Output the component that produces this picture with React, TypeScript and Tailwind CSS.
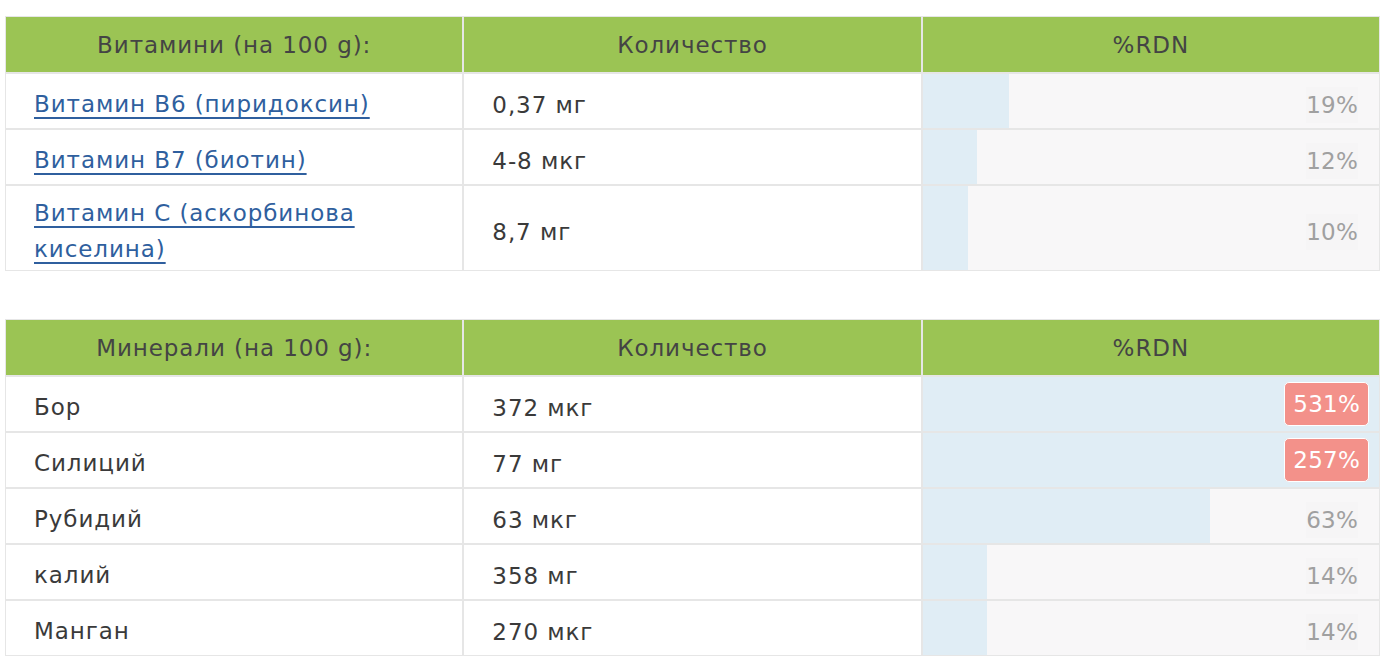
import React from "react";

type Row = { name: string; link?: boolean; qty: string; pct: number };

const vitamins: Row[] = [
  { name: "Витамин B6 (пиридоксин)", link: true, qty: "0,37 мг", pct: 19 },
  { name: "Витамин B7 (биотин)", link: true, qty: "4-8 мкг", pct: 12 },
  { name: "Витамин C (аскорбинова киселина)", link: true, qty: "8,7 мг", pct: 10 },
];

const minerals: Row[] = [
  { name: "Бор", qty: "372 мкг", pct: 531 },
  { name: "Силиций", qty: "77 мг", pct: 257 },
  { name: "Рубидий", qty: "63 мкг", pct: 63 },
  { name: "калий", qty: "358 мг", pct: 14 },
  { name: "Манган", qty: "270 мкг", pct: 14 },
];

function Table({ title, rows }: { title: string; rows: Row[] }) {
  return (
    <table className="w-full table-fixed border-separate border-spacing-0 text-[23px] leading-[36px] tracking-[0.04em]">
      <thead>
        <tr>
          {[title, "Количество", "%RDN"].map((h) => (
            <th
              key={h}
              className="h-[57px] border border-[#e6e6e6] bg-[#9bc454] px-7 text-center font-normal text-[#444444]"
            >
              {h}
            </th>
          ))}
        </tr>
      </thead>
      <tbody>
        {rows.map((r) => (
          <tr key={r.name}>
            <td className="h-[56px] border border-[#e6e6e6] bg-white px-7 pt-[9px] pb-[3px] text-[#3a3a3a]">
              {r.link ? (
                <a href="#" className="text-[#2f5f9e] underline decoration-[2px] underline-offset-[5px]">
                  {r.name}
                </a>
              ) : (
                r.name
              )}
            </td>
            <td className="border border-[#e6e6e6] bg-white px-7 pt-[8px] text-[#3a3a3a]">{r.qty}</td>
            <td className="relative border border-[#e6e6e6] bg-[#f8f7f8] p-0">
              <div
                className="absolute inset-y-0 left-0 bg-[#e0edf5]"
                style={{ width: `${Math.min(r.pct, 100)}%` }}
              />
              <div className="relative flex h-full items-center justify-end pr-[21px] pt-[8px]">
                {r.pct > 100 ? (
                  <span className="-mr-[11px] -mt-[8px] rounded-[5px] border border-white bg-[#f3918a] px-[8px] py-[4px] leading-[34px] tracking-[0.01em] text-white">
                    {r.pct}%
                  </span>
                ) : (
                  <span className="bg-[#f6f5f6] tracking-[0.01em] text-[#a0a0a0]">{r.pct}%</span>
                )}
              </div>
            </td>
          </tr>
        ))}
      </tbody>
    </table>
  );
}

export default function App() {
  return (
    <div
      lang="bg"
      className="min-h-[664px] bg-white px-[5px] pt-[16px]"
      style={{ fontFamily: '"DejaVu Sans", "Noto Sans", sans-serif' }}
    >
      <div className="w-[1375px]">
        <Table title="Витамини (на 100 g):" rows={vitamins} />
        <div className="h-[48px]" />
        <Table title="Минерали (на 100 g):" rows={minerals} />
      </div>
    </div>
  );
}
